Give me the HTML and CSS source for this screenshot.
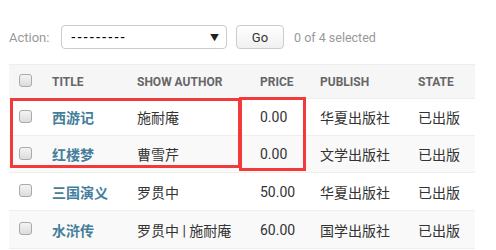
FILE: index.html
```html
<!DOCTYPE html>
<html>
<head>
<meta charset="utf-8">
<link rel="stylesheet" href="styles.css">
</head>
<body>
<div class="page">
  <div class="actions">
    <label class="action-label">Action:</label>
    <div class="select"><span class="select-text">---------</span><span class="arrow">▼</span></div>
    <button class="go">Go</button>
    <span class="counter">0 of 4 selected</span>
  </div>
  <table class="results">
    <colgroup>
      <col class="c-check"><col class="c-title"><col class="c-author"><col class="c-price"><col class="c-pub"><col class="c-state">
    </colgroup>
    <thead>
      <tr><th><span class="cb"></span></th><th>Title</th><th>Show author</th><th>Price</th><th>Publish</th><th>State</th></tr>
    </thead>
    <tbody>
      <tr><td><span class="cb"></span></td><th><a>西游记</a></th><td>施耐庵</td><td>0.00</td><td>华夏出版社</td><td>已出版</td></tr>
      <tr class="alt"><td><span class="cb"></span></td><th><a>红楼梦</a></th><td>曹雪芹</td><td>0.00</td><td>文学出版社</td><td>已出版</td></tr>
      <tr><td><span class="cb"></span></td><th><a>三国演义</a></th><td>罗贯中</td><td>50.00</td><td>华夏出版社</td><td>已出版</td></tr>
      <tr class="alt"><td><span class="cb"></span></td><th><a>水浒传</a></th><td>罗贯中 | 施耐庵</td><td>60.00</td><td>国学出版社</td><td>已出版</td></tr>
    </tbody>
  </table>
  <div class="mark mark-rows"></div>
  <div class="mark mark-price"></div>
</div>
</body>
</html>
```

FILE: styles.css
```css
html, body { margin: 0; padding: 0; background: #fff; }
body { font-family: Roboto, "Noto Sans CJK SC", sans-serif; color: #333; }
.page { position: relative; padding: 25px 0 0 9px; width: 466px; }
.actions { display: flex; align-items: center; height: 24px; }
.action-label { font-size: 13px; color: #999; width: 52px; }
.select { box-sizing: border-box; width: 166px; height: 24px; border: 1px solid #ccc; border-radius: 4px; display: flex; align-items: center; justify-content: space-between; padding: 0 7px 0 9px; background: #fff; }
.select-text { font-family: "Liberation Sans", sans-serif; font-size: 14px; color: #000; letter-spacing: 1.5px; }
.arrow { font-size: 9px; color: #222; }
.go { box-sizing: border-box; margin-left: 9px; width: 48px; height: 24px; border: 1px solid #ccc; border-radius: 4px; background: linear-gradient(#fff, #f0f0f0); font-family: Roboto, sans-serif; font-size: 13px; color: #333; padding: 0; }
.counter { margin-left: 10px; font-size: 12.5px; color: #999; }
.results { margin-top: 15px; width: 466px; border-collapse: collapse; table-layout: fixed; }
.c-check { width: 33px; } .c-title { width: 85px; } .c-author { width: 123px; } .c-price { width: 60px; } .c-pub { width: 98px; } .c-state { width: 67px; }
.results thead th { background: #f6f6f6; height: 34px; padding: 0 0 0 10px; text-align: left; font-size: 12px; font-weight: 700; text-transform: uppercase; color: #666; border-top: 1px solid #eee; border-bottom: 1px solid #eee; box-sizing: border-box; }
.results tbody td, .results tbody th { height: 36px; padding: 0 0 0 10px; text-align: left; font-size: 14px; font-weight: 400; border-bottom: 1px solid #eee; white-space: nowrap; vertical-align: middle; }
.results tbody tr:nth-child(n+3) td, .results tbody tr:nth-child(n+3) th { height: 37px; }
.results tbody th a { color: #447e9b; font-weight: 700; }
.results tbody tr.alt td, .results tbody tr.alt th { background: #f9f9f9; }
.cb { display: block; box-sizing: border-box; width: 13px; height: 13px; border: 1px solid #aaa; border-radius: 3px; background: linear-gradient(#f4f4f4, #dcdcdc); margin-top: -2px; }
.mark { position: absolute; box-sizing: border-box; border: 3px solid #f23a3a; }
.mark-rows { left: 10px; top: 98px; width: 231px; height: 70px; }
.mark-price { left: 239px; top: 97px; width: 67px; height: 74px; }
```
